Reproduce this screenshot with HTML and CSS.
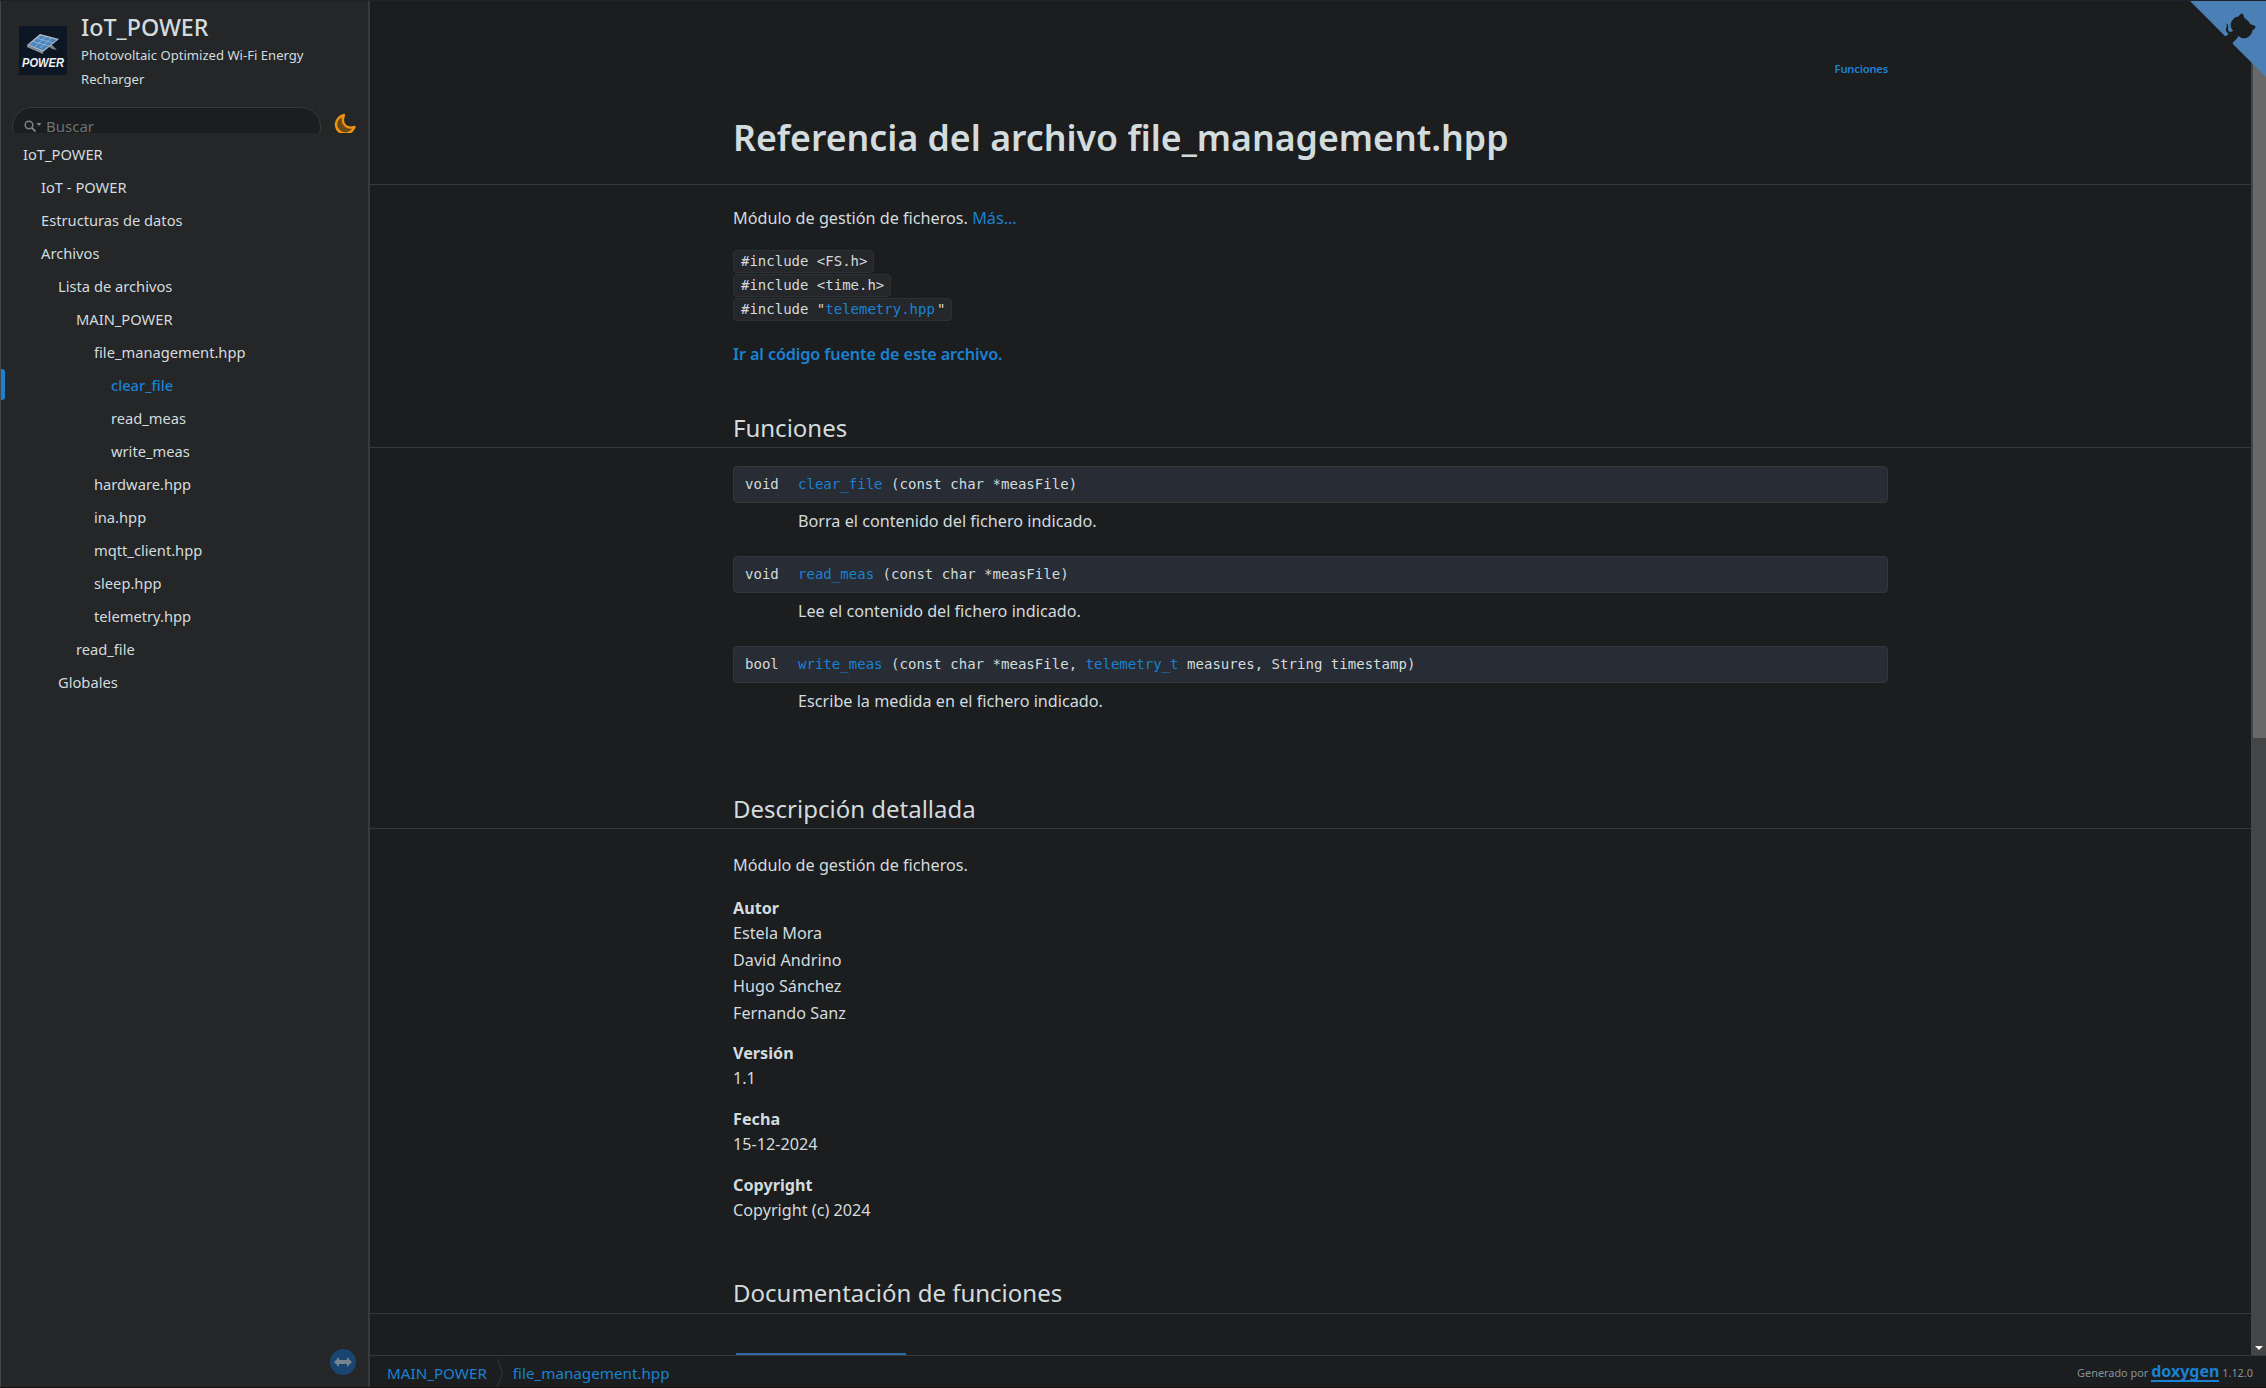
FILE: index.html
```html
<!DOCTYPE html>
<html lang="es">
<head>
<meta charset="utf-8">
<title>IoT_POWER: Referencia del archivo file_management.hpp</title>
<link rel="stylesheet" href="styles.css">
</head>
<body>
<div class="app">
  <aside class="sidebar">
    <header class="brand">
      <svg class="logo" viewBox="0 0 48 49" aria-hidden="true">
        <rect width="48" height="49" fill="#0d1623"/>
        <path d="M30 16 L38 24 L33 23 L28 19Z" fill="#7d8489"/>
        <path d="M8 19 L21 8 L40 13 L24 26Z" fill="#b3bcc4"/>
        <path d="M10 18.800 L21.500 9.500 L38 13.700 L24 24.500Z" fill="#4d86bb"/>
        <path d="M14 15.500 L30 20 M18 12.200 L34 17 M16 20.500 L27 10.800 M21 22 L32 12.200" stroke="#a9c8e2" stroke-width=".6"/>
        <path d="M8 19 L24 26 L24 28 L8 21Z" fill="#8a9299"/>
        <text x="3" y="41" class="logo-text" textLength="42" lengthAdjust="spacingAndGlyphs">POWER</text>
      </svg>
      <div class="brand-text">
        <div class="brand-title">IoT_POWER</div>
        <div class="brand-sub">Photovoltaic Optimized Wi-Fi Energy Recharger</div>
      </div>
    </header>
    <div class="searchrow">
      <div class="search">
        <svg class="search-icon" viewBox="0 0 20 14" aria-hidden="true">
          <circle cx="6" cy="6" r="3.800" fill="none" stroke="#7d8487" stroke-width="1.500"/>
          <path d="M9 9 L12.500 12.500" stroke="#7d8487" stroke-width="1.800"/>
          <path d="M13.500 4 L18.500 4 L16 7Z" fill="#7d8487"/>
        </svg>
        <span>Buscar</span>
      </div>
      <svg class="moon" viewBox="0 0 24 24" aria-hidden="true">
        <path d="M11 3 C5.500 4.500 2.500 9 3 13.500 C3.600 18.500 8 22 13 21.500 C16.800 21 20 18.500 21.500 15 C16 16.500 12 14.500 10.500 11 C9.500 8.500 10 5.500 11 3Z" fill="#6b4a17" stroke="#f0930e" stroke-width="2.400" stroke-linejoin="round"/>
      </svg>
    </div>
    <nav class="tree">
      <a class="node lvl0" href="#">IoT_POWER</a>
      <a class="node lvl1" href="#">IoT - POWER</a>
      <a class="node lvl1" href="#">Estructuras de datos</a>
      <a class="node lvl1" href="#">Archivos</a>
      <a class="node lvl2" href="#">Lista de archivos</a>
      <a class="node lvl3" href="#">MAIN_POWER</a>
      <a class="node lvl4" href="#">file_management.hpp</a>
      <a class="node lvl5 current" href="#">clear_file</a>
      <a class="node lvl5" href="#">read_meas</a>
      <a class="node lvl5" href="#">write_meas</a>
      <a class="node lvl4" href="#">hardware.hpp</a>
      <a class="node lvl4" href="#">ina.hpp</a>
      <a class="node lvl4" href="#">mqtt_client.hpp</a>
      <a class="node lvl4" href="#">sleep.hpp</a>
      <a class="node lvl4" href="#">telemetry.hpp</a>
      <a class="node lvl3" href="#">read_file</a>
      <a class="node lvl2" href="#">Globales</a>
    </nav>
    <div class="sync">
      <svg viewBox="0 0 26 26" aria-hidden="true">
        <circle cx="13" cy="13" r="13" fill="#1a4570"/>
        <path d="M4 13 L9 8 L9 11 L17 11 L17 8 L22 13 L17 18 L17 15 L9 15 L9 18Z" fill="#77838d"/>
      </svg>
    </div>
  </aside>
  <div class="right">
    <div class="viewport">
      <main class="doc">
        <div class="wrap summary"><a href="#">Funciones</a></div>
        <div class="band title-band"><h1 class="wrap">Referencia del archivo file_management.hpp</h1></div>
        <div class="wrap intro">
          <p class="brief">Módulo de gestión de ficheros. <a href="#">Más...</a></p>
          <div class="includes">
            <code>#include &lt;FS.h&gt;</code>
            <code>#include &lt;time.h&gt;</code>
            <code>#include "<a href="#">telemetry.hpp</a>"</code>
          </div>
          <p class="source"><a href="#">Ir al código fuente de este archivo.</a></p>
        </div>
        <div class="band head-funcs"><h2 class="wrap">Funciones</h2></div>
        <div class="wrap members">
          <div class="member">
            <div class="sig"><span class="type">void</span><span><a href="#">clear_file</a> (const char *measFile)</span></div>
            <p class="desc">Borra el contenido del fichero indicado.</p>
          </div>
          <div class="member">
            <div class="sig"><span class="type">void</span><span><a href="#">read_meas</a> (const char *measFile)</span></div>
            <p class="desc">Lee el contenido del fichero indicado.</p>
          </div>
          <div class="member">
            <div class="sig"><span class="type">bool</span><span><a href="#">write_meas</a> (const char *measFile, <a href="#">telemetry_t</a> measures, String timestamp)</span></div>
            <p class="desc">Escribe la medida en el fichero indicado.</p>
          </div>
        </div>
        <div class="band head-detail"><h2 class="wrap">Descripción detallada</h2></div>
        <div class="wrap detail">
          <p class="brief-2">Módulo de gestión de ficheros.</p>
          <dl>
            <dt>Autor</dt>
            <dd>Estela Mora</dd>
            <dd>David Andrino</dd>
            <dd>Hugo Sánchez</dd>
            <dd>Fernando Sanz</dd>
          </dl>
          <dl>
            <dt>Versión</dt>
            <dd>1.1</dd>
          </dl>
          <dl>
            <dt>Fecha</dt>
            <dd>15-12-2024</dd>
          </dl>
          <dl>
            <dt>Copyright</dt>
            <dd>Copyright (c) 2024</dd>
          </dl>
        </div>
        <div class="band head-docs"><h2 class="wrap">Documentación de funciones</h2></div>
        <div class="wrap next"><div class="memname"></div></div>
      </main>
      <div class="scrollbar">
        <div class="thumb"></div>
        <div class="arrow"></div>
      </div>
    </div>
    <footer class="navpath">
      <div class="crumbs">
        <a href="#">MAIN_POWER</a>
        <svg class="chev" viewBox="0 0 8 32" aria-hidden="true"><path d="M1 0 L7 16 L1 32" fill="none" stroke="#38393b"/></svg>
        <a href="#">file_management.hpp</a>
      </div>
      <div class="generated">Generado por <a href="#">doxygen</a> 1.12.0</div>
    </footer>
  </div>
  <svg class="corner" viewBox="0 0 250 250" aria-hidden="true">
    <path class="corner-bg" d="M0,0 L115,115 L130,115 L142,142 L250,250 L250,0 Z"/>
    <path class="corner-cat" d="M128.3,109.0 C113.8,99.7 119.0,89.6 119.0,89.6 C122.0,82.7 120.5,78.6 120.5,78.6 C119.2,72.0 123.4,76.3 123.4,76.3 C127.3,80.9 125.5,87.3 125.5,87.3 C122.9,97.6 130.6,101.9 134.4,103.2"/>
    <path class="corner-cat" d="M115.0,115.0 C114.9,115.1 118.7,116.5 119.8,115.4 L133.7,101.6 C136.9,99.2 139.9,98.4 142.2,98.6 C133.8,88.0 127.5,74.4 143.8,58.0 C148.5,53.4 154.0,51.2 159.7,51.0 C160.3,49.4 163.2,43.6 171.4,40.1 C171.4,40.1 176.1,42.5 178.8,56.2 C183.1,58.6 187.2,61.8 190.9,65.4 C194.5,69.0 197.7,73.2 200.1,77.6 C213.8,80.2 216.3,84.9 216.3,84.9 C212.7,93.1 206.9,96.0 205.4,96.6 C205.1,102.4 203.0,107.8 198.3,112.5 C181.9,128.9 168.3,122.5 157.7,114.1 C157.9,116.9 156.7,120.9 152.7,124.9 L141.0,136.5 C139.8,137.7 141.6,141.9 141.8,141.8 Z"/>
  </svg>
</div>
</body>
</html>
```
FILE: styles.css
```css
* { box-sizing: border-box; }
html, body { margin: 0; height: 100%; overflow: hidden; }
body {
  background: #1c1d1f;
  color: #d2dbde;
  font-family: "Noto Sans", "Open Sans", sans-serif;
  font-size: 16.200px;
}
a { color: #1982d2; text-decoration: none; }
p { margin: 0; }

.app {
  position: relative;
  display: flex;
  height: 1388px;
  border-top: 1px solid #20212b;
  border-bottom: 1px solid #111;
  overflow: hidden;
}

/* Sidebar */
.sidebar {
  position: relative;
  flex: 0 0 370px;
  display: flex;
  flex-direction: column;
  background: #252628;
  border-left: 1px solid #44464a;
  border-right: 2px solid #38393b;
}
.brand { display: flex; gap: 15px; padding: 25px 40px 0 18px; height: 106px; }
.logo { flex: 0 0 48px; width: 48px; height: 49px; }
.logo-text { font: italic 700 13px "Liberation Sans", sans-serif; fill: #eef1f3; }
.brand-text { margin-top: -15px; margin-left: -1px; }
.brand-title { font-size: 23.300px; font-weight: 500; line-height: 32px; }
.brand-sub { font-size: 13.100px; line-height: 24px; }
.searchrow { display: flex; height: 26px; overflow: hidden; }
.search {
  display: flex;
  align-items: flex-start;
  margin-left: 11px;
  width: 309px;
  height: 40px;
  padding: 8px 0 0 10px;
  gap: 3px;
  background: #1c1d1f;
  border: 1px solid #38393b;
  border-radius: 20px;
  color: #6c7275;
  font-size: 15px;
  line-height: 20px;
}
.search-icon { width: 20px; height: 14px; margin-top: 3px; }
.moon { width: 24px; height: 24px; margin: 5px 0 0 12px; }
.tree { display: flex; flex-direction: column; padding-top: 5px; }
.node { display: block; height: 33px; line-height: 33px; color: #d2dbde; font-size: 14.700px; }
.lvl0 { padding-left: 22px; }
.lvl1 { padding-left: 40px; }
.lvl2 { padding-left: 57px; }
.lvl3 { padding-left: 75px; }
.lvl4 { padding-left: 93px; }
.lvl5 { padding-left: 110px; }
.current { position: relative; color: #1982d2; font-weight: 500; }
.current::before {
  content: "";
  position: absolute;
  left: 0;
  top: 0;
  width: 4px;
  height: 31px;
  background: #1982d2;
  border-radius: 0 3px 3px 0;
}
.sync { position: absolute; left: 329px; top: 1348px; width: 26px; height: 26px; }
.sync svg { display: block; width: 26px; height: 26px; }

/* Content column */
.right { flex: 1; min-width: 0; display: flex; flex-direction: column; }
.viewport { flex: 1; min-height: 0; display: flex; overflow: hidden; }
.doc { flex: 1; min-width: 0; overflow: hidden; }
.wrap { width: 1155px; margin-left: 363px; }
.band { border-bottom: 1px solid #38393b; }

.summary { padding-top: 59px; text-align: right; font-size: 11.200px; font-weight: 600; line-height: 18px; letter-spacing: -0.2px; }
h1 { margin: 0; font-size: 35.700px; font-weight: 600; line-height: 50px; }
.title-band { height: 130px; margin-top: -23px; padding-top: 57px; }
.intro { padding-top: 21px; }
.brief { line-height: 24px; }
.includes { margin-top: 20px; display: flex; flex-direction: column; align-items: flex-start; gap: 1px; }
.includes a { margin-right: 2px; }
code {
  display: block;
  font: 14px/21px "DejaVu Sans Mono", monospace;
  padding: 0 6px 0 7px;
  background: #26272b;
  border: 1px solid #2f3033;
  border-radius: 4px;
  height: 23px;
}
.source { margin-top: 21px; line-height: 24px; font-weight: 600; letter-spacing: -0.1px; }

h2 { margin: 0; font-size: 24px; font-weight: 400; line-height: 34px; }
.head-funcs { margin-top: 45px; padding-bottom: 2px; }
.members { padding-top: 18px; }
.member { height: 90px; }
.sig {
  display: flex;
  height: 37px;
  align-items: center;
  padding: 0 0 1px 11px;
  background: #282c34;
  border: 1px solid #34363b;
  border-radius: 4px;
  font: 14.050px "DejaVu Sans Mono", monospace;
}
.type { width: 53px; }
.desc { margin: 6px 0 0 65px; line-height: 24px; }
.head-detail { margin-top: 56px; padding-bottom: 2px; }
.detail { padding-top: 24px; }
.brief-2 { line-height: 24px; }
dl { margin: 0; }
dl:first-of-type { margin-top: 20px; }
dl + dl { margin-top: 16px; }
dt { font-weight: 700; line-height: 23px; }
dd { margin: 0; line-height: 26.600px; }
.head-docs { margin-top: 53px; padding-bottom: 3px; }
.next { padding-top: 39px; }
.memname { margin-left: 3px; width: 170px; height: 2px; background: #2f6aa3; }

/* Scrollbar */
.scrollbar {
  position: relative;
  flex: 0 0 15px;
  background: #444546;
  padding-left: 2px;
}
.thumb { height: 737px; background: #686868; }
.arrow {
  position: absolute;
  right: 3px;
  bottom: 5px;
  width: 0;
  height: 0;
  border-left: 4px solid transparent;
  border-right: 4px solid transparent;
  border-top: 4px solid #fff;
}

/* Footer */
.navpath {
  flex: 0 0 32px;
  display: flex;
  justify-content: space-between;
  align-items: center;
  padding: 2px 13px 0 17px;
  border-top: 1px solid #38393b;
  background: #1c1d1f;
}
.crumbs { display: flex; align-items: center; gap: 9px; font-size: 15.200px; }
.chev { width: 8px; height: 28px; }
.generated { font-size: 10.900px; color: #859399; }
.generated a { font-size: 16px; font-weight: 700; border-bottom: 2px solid #1982d2; line-height: 17px; display: inline-block; }

/* Corner ribbon */
.corner { position: absolute; top: 0; right: 0; width: 76px; height: 76px; }
.corner-bg { fill: #4a80b5; }
.corner-cat { fill: #1c1d1f; }
```
